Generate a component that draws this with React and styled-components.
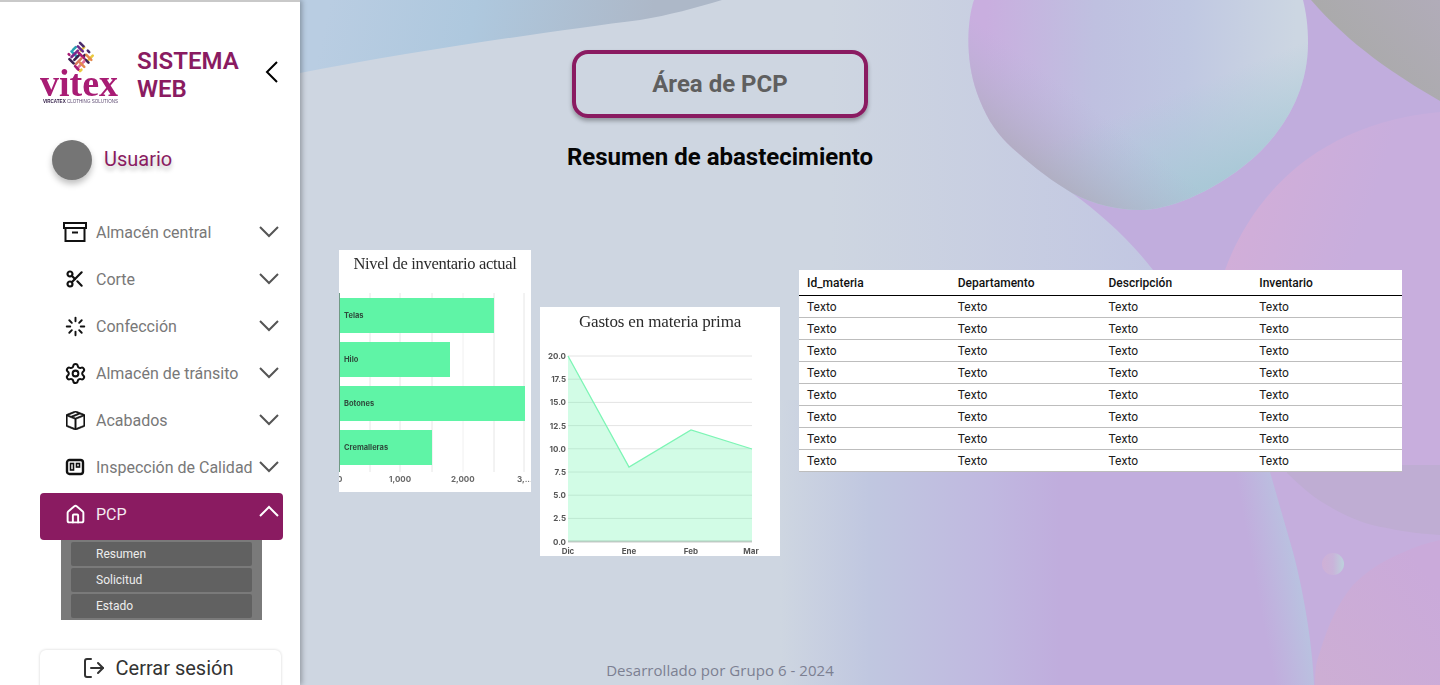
import React from "react";
import styled, { createGlobalStyle } from "styled-components";
import { Scissors, Loader, Settings, House, LogOut } from "lucide-react";
import { BsBoxSeam } from "react-icons/bs";

const GlobalStyle = createGlobalStyle`
  html, body {
    margin: 0;
    padding: 0;
    height: 100%;
    overflow: hidden;
    font-family: Roboto, "Liberation Sans", sans-serif;
  }
  * {
    box-sizing: border-box;
  }
`;

const Page = styled.div`
  display: flex;
  width: 100%;
  height: 685px;
  overflow: hidden;
`;

const Sidebar = styled.aside`
  position: relative;
  z-index: 2;
  flex: 0 0 300px;
  height: 685px;
  overflow: hidden;
  background: #fff;
  border-top: 2px solid #c9c9c9;
  box-shadow: 2px 0 5px rgba(0, 0, 0, 0.28);
`;

const Brand = styled.div`
  display: flex;
  align-items: center;
  height: 64px;
  margin: 38px 21px 0 40px;
`;

const LogoMark = styled.svg`
  flex: 0 0 79px;
  width: 79px;
  height: 64px;
  filter: blur(0.3px);
`;

const BrandName = styled.div`
  margin: 6px 0 0 18px;
  font-size: 24px;
  line-height: 28px;
  font-weight: 600;
  color: #8a1b61;
`;

const CollapseButton = styled.svg`
  margin-left: auto;
  width: 14px;
  height: 24px;
  fill: none;
  stroke: #000;
  stroke-width: 2;
`;

const UserRow = styled.div`
  display: flex;
  align-items: center;
  gap: 12px;
  margin: 36px 0 0 52px;
`;

const Avatar = styled.div`
  width: 40px;
  height: 40px;
  border-radius: 50%;
  background: #757575;
  box-shadow: 0 4px 6px rgba(0, 0, 0, 0.25);
`;

const UserName = styled.span`
  margin-top: -2px;
  font-size: 20px;
  color: #8a1b61;
  text-shadow: 0 4px 4px rgba(0, 0, 0, 0.25);
`;

const Nav = styled.nav`
  margin: 31px 17px 0 40px;
`;

const NavItem = styled.div`
  display: flex;
  align-items: center;
  height: 47px;
  padding: 0 4px 5px 23px;
  border-radius: 4px;
  font-size: 16px;
  color: ${(p) => (p.$active ? "#f4eaf1" : "#787878")};
  background: ${(p) => (p.$active ? "#8a1b61" : "transparent")};
`;

const NavIcon = styled.span`
  display: flex;
  align-items: center;
  justify-content: center;
  width: 24px;
  height: 24px;
  margin-right: 9px;
  color: ${(p) => (p.$active ? "#fff" : "#111")};
`;

const Caret = styled.svg`
  margin-left: auto;
  width: 20px;
  height: 12px;
  overflow: visible;
  fill: none;
  stroke: ${(p) => (p.$active ? "#fff" : "#555")};
  stroke-width: 2;
`;

const SubMenu = styled.div`
  display: flex;
  flex-direction: column;
  gap: 2px;
  width: 201px;
  margin-left: 21px;
  padding: 2px 10px;
  background: #7a7a7a;
`;

const SubItem = styled.div`
  height: 24px;
  padding-left: 25px;
  border-radius: 2px;
  background: #616161;
  font-size: 12px;
  line-height: 24px;
  color: #ededed;
`;

const LogoutCard = styled.div`
  display: flex;
  justify-content: center;
  gap: 10px;
  width: 241px;
  height: 60px;
  margin: 30px 0 0 40px;
  padding: 6px 6px 0 0;
  border-radius: 6px;
  background: #fff;
  box-shadow: 0 0 3px rgba(0, 0, 0, 0.18);
  font-size: 20px;
  line-height: 24px;
  color: #333;
`;

const Main = styled.main`
  position: relative;
  flex: 1;
  display: flex;
  flex-direction: column;
  height: 685px;
  overflow: hidden;
`;

const Backdrop = styled.svg`
  position: absolute;
  inset: 0;
  width: 100%;
  height: 100%;
`;

const Header = styled.header`
  position: relative;
  display: flex;
  flex-direction: column;
  align-items: center;
  padding: 50px 300px 0 0;
`;

const AreaBox = styled.div`
  display: flex;
  align-items: center;
  justify-content: center;
  width: 296px;
  height: 68px;
  border: 4px solid #8a1b61;
  border-radius: 16px;
  box-shadow: 0 3px 4px rgba(0, 0, 0, 0.3);
  font-size: 24px;
  font-weight: 700;
  color: #5f5f5f;
`;

const Subtitle = styled.h2`
  margin: 24px 0 0;
  font-size: 24px;
  line-height: 30px;
  font-weight: 700;
  color: #050505;
`;

const Widgets = styled.section`
  position: relative;
  display: flex;
  align-items: flex-start;
  padding-left: 39px;
  margin-top: 78px;
`;

const ChartCard = styled.figure`
  flex: none;
  position: relative;
  margin: ${(p) => p.$top || 0}px 0 0 ${(p) => p.$left || 0}px;
  width: ${(p) => p.$w}px;
  height: ${(p) => p.$h}px;
  background: #fff;
  overflow: hidden;
`;

const ChartTitle = styled.figcaption`
  padding-top: ${(p) => p.$pad}px;
  text-align: center;
  font-family: "Liberation Serif", serif;
  font-size: ${(p) => p.$size}px;
  letter-spacing: ${(p) => p.$track}px;
  line-height: 20px;
  color: #2b2b2b;
  filter: blur(0.3px);
`;

const ChartSvg = styled.svg`
  position: absolute;
  inset: 0;
  width: 100%;
  height: 100%;
  filter: blur(0.45px);
  font-family: Inter, Roboto, sans-serif;
`;

const Table = styled.table`
  flex: none;
  width: 603px;
  margin: 20px 0 0 19px;
  border-collapse: collapse;
  table-layout: fixed;
  background: #fff;
  font-size: 12px;
  color: #1b1b1b;
`;

const Th = styled.th`
  height: 25px;
  padding: 1px 8px 0;
  text-align: left;
  font-weight: 500;
  color: #111;
  border-bottom: 1px solid #000;
`;

const Td = styled.td`
  height: 22px;
  padding: 1px 8px 0;
  border-bottom: 1px solid #bdbdbd;
`;

const Footer = styled.footer`
  position: relative;
  margin-top: auto;
  padding: 0 300px 6px 0;
  text-align: center;
  font-family: "Open Sans", sans-serif;
  font-size: 15px;
  line-height: 18px;
  letter-spacing: 0.05px;
  color: #7c8092;
`;

const menu = [
  { label: "Almacén central", icon: <ArchiveIcon /> },
  { label: "Corte", icon: <Scissors size={20} strokeWidth={2.6} /> },
  { label: "Confección", icon: <Loader size={21} strokeWidth={2.2} /> },
  { label: "Almacén de tránsito", icon: <Settings size={23} strokeWidth={2.1} /> },
  { label: "Acabados", icon: <BsBoxSeam size={19} style={{ stroke: "currentColor", strokeWidth: 0.6 }} /> },
  { label: "Inspección de Calidad", icon: <BoardIcon /> },
];

const subItems = ["Resumen", "Solicitud", "Estado"];
const columns = ["Id_materia", "Departamento", "Descripción", "Inventario"];
const rows = [1, 2, 3, 4, 5, 6, 7, 8];

// dashes of the logo knot, in a square that is turned 45deg: [colour, x1, y1, x2, y2]
const weave = [
  ["#e9c93f", -4, -10, -4, -5],
  ["#2a9fb0", -10, -4, -10, 0],
  ["#4a2a6b", -10, -10, -5, -10],
  ["#4a2a6b", 1, -10, 3, -10],
  ["#3a2050", 2, -5, 2, -3],
  ["#e9c93f", 8, -10, 8, -4],
  ["#6a2a8c", -9, -6, -2, -6],
  ["#e58a4e", 3, -6, 10, -6],
  ["#26a6bb", -10, 2, -3, 2],
  ["#a81c74", -4, -2, 4, -2],
  ["#3a2050", 6, -2, 10, -2],
  ["#7a2a8c", -6, -3, -6, 6],
  ["#3a2050", -2, 0, -2, 6],
  ["#d9795e", 2, 0, 2, 8],
  ["#e0709a", 6, 0, 6, 10],
  ["#a81c74", -10, 6, -9, 6],
  ["#3a2050", -6, 9, 0, 9],
  ["#e58a4e", 4, 4, 10, 4],
  ["#a81c74", 3, 10, 8, 10],
  ["#e9c93f", 10, 8, 10, 10],
];

function ArchiveIcon() {
  return (
    <svg width="24" height="20" viewBox="0 0 24 20" fill="none" stroke="currentColor" strokeWidth="2">
      <path d="M1 1h22v5H1z" />
      <path d="M2.5 6v13h19V6" />
      <path d="M9 10.5h6" />
    </svg>
  );
}

function BoardIcon() {
  return (
    <svg width="20" height="18" viewBox="0 0 20 18" fill="none" stroke="currentColor" strokeWidth="2.4">
      <rect x="2" y="2" width="16" height="14" rx="2.5" />
      <rect x="5.5" y="5.5" width="3" height="6.5" strokeWidth="1.6" />
      <rect x="11.5" y="5.5" width="3" height="3.5" strokeWidth="1.6" />
    </svg>
  );
}

function ChevronDown({ up, active }) {
  return (
    <Caret viewBox="0 0 20 12" $active={active}>
      <path d={up ? "M1 8 10 -1l9 9" : "M1 1l9 9 9-9"} />
    </Caret>
  );
}

function Logo() {
  return (
    <LogoMark viewBox="0 0 79 64">
      <g transform="translate(40 17) rotate(45)" strokeWidth="2.6" strokeLinecap="round">
        {weave.map(([color, x1, y1, x2, y2], i) => (
          <line key={i} x1={x1} y1={y1} x2={x2} y2={y2} stroke={color} />
        ))}
      </g>
      <text
        x="0"
        y="55.5"
        fontFamily="Liberation Serif, serif"
        fontWeight="700"
        fontSize="38"
        fill="#a81c74"
      >
        vitex
      </text>
      <text x="3" y="62.5" fontFamily="Liberation Sans, sans-serif" fontSize="5" textLength="75" lengthAdjust="spacingAndGlyphs" fill="#5d4a72">
        <tspan fontWeight="700" fill="#2f1b45">VIRCATEX</tspan> CLOTHING SOLUTIONS
      </text>
    </LogoMark>
  );
}

function BarChart() {
  const bars = [
    ["Telas", 48, 155],
    ["Hilo", 92, 111],
    ["Botones", 136, 186],
    ["Cremalleras", 180, 93],
  ];
  return (
    <ChartSvg viewBox="0 0 192 242">
      {[31, 61, 93, 124, 155, 185].map((x) => (
        <line key={x} x1={x} x2={x} y1="43" y2="222" stroke={x % 2 ? "#e6e6e6" : "#f0f0f0"} />
      ))}
      {bars.map(([name, y, w]) => (
        <g key={name}>
          <rect x="0" y={y} width={w} height="35" fill="#5ff4a6" />
          <text x="5" y={y + 20} fontSize="7.5" fontWeight="700" fill="#2f4a3c">
            {name}
          </text>
        </g>
      ))}
      <line x1="0.5" x2="0.5" y1="43" y2="222" stroke="#6f9a84" />
      {[["0", -2], ["1,000", 50], ["2,000", 112], ["3,...", 178]].map(([t, x]) => (
        <text key={t} x={x} y="232" fontSize="8" fontWeight="700" fill="#666">
          {t}
        </text>
      ))}
    </ChartSvg>
  );
}

function AreaChart() {
  const ticks = ["20.0", "17.5", "15.0", "12.5", "10.0", "7.5", "5.0", "2.5", "0.0"];
  const y = (i) => 49 + i * 23.2;
  return (
    <ChartSvg viewBox="0 0 240 249">
      {ticks.map((t, i) => (
        <g key={t}>
          <line x1="28" x2="212" y1={y(i)} y2={y(i)} stroke={i === 8 ? "#c8c8c8" : "#e4e4e4"} strokeWidth={i === 8 ? 2 : 1} />
          <text x="26" y={y(i) + 3} textAnchor="end" fontSize="8" fontWeight="700" fill="#555">
            {t}
          </text>
        </g>
      ))}
      <path d="M28 49 89 160 151 123 212 142V234.6H28Z" fill="#5ff4a6" fillOpacity="0.28" />
      <path d="M28 49 89 160 151 123 212 142" fill="none" stroke="#7df5b5" strokeWidth="1.3" />
      {[["Dic", 28], ["Ene", 89], ["Feb", 151], ["Mar", 211]].map(([t, x]) => (
        <text key={t} x={x} y="247" textAnchor="middle" fontSize="8" fontWeight="700" fill="#555">
          {t}
        </text>
      ))}
    </ChartSvg>
  );
}

const sphere =
  "M974 0C967 20 965 60 977 93 985 115 994 130 1007 143 1028 163 1050 180 1072 193 1095 205 1118 210 1141 210 1165 210 1210 195 1251 160 1285 130 1308 90 1308 43 1308 25 1306 12 1303 0Z";

function Background() {
  return (
    <Backdrop viewBox="300 0 1140 685" preserveAspectRatio="none">
      <defs>
        <linearGradient id="lightUp" gradientUnits="userSpaceOnUse" x1="830" y1="0" x2="1150" y2="0">
          <stop offset="0" stopColor="#ced6e1" />
          <stop offset="1" stopColor="#c2c7e2" />
        </linearGradient>
        <linearGradient id="lightDown" gradientUnits="userSpaceOnUse" x1="780" y1="0" x2="1060" y2="0">
          <stop offset="0" stopColor="#ced6e1" />
          <stop offset="0.32" stopColor="#c0c7e0" />
          <stop offset="0.75" stopColor="#c0b8e0" />
          <stop offset="1" stopColor="#c0addd" />
        </linearGradient>
        <linearGradient id="topBlob" gradientUnits="userSpaceOnUse" x1="330" y1="0" x2="640" y2="70">
          <stop offset="0" stopColor="#b9cde2" />
          <stop offset="0.45" stopColor="#aec8de" />
          <stop offset="1" stopColor="#adb8c8" />
        </linearGradient>
        <linearGradient id="sphere" gradientUnits="userSpaceOnUse" x1="985" y1="50" x2="1295" y2="60">
          <stop offset="0" stopColor="#c9aedf" />
          <stop offset="0.35" stopColor="#bfc0e0" />
          <stop offset="0.65" stopColor="#c0c8e2" />
          <stop offset="1" stopColor="#ccd6e2" />
        </linearGradient>
        <linearGradient id="sphereEdge" gradientUnits="userSpaceOnUse" x1="1130" y1="110" x2="1170" y2="212">
          <stop offset="0" stopColor="#a8cbd8" stopOpacity="0" />
          <stop offset="0.9" stopColor="#a8c8d6" stopOpacity="0.95" />
        </linearGradient>
        <linearGradient id="sphereShade" gradientUnits="userSpaceOnUse" x1="1030" y1="185" x2="1090" y2="105">
          <stop offset="0" stopColor="#adaab8" />
          <stop offset="1" stopColor="#b5b4d6" stopOpacity="0" />
        </linearGradient>
        <linearGradient id="grayBlob" gradientUnits="userSpaceOnUse" x1="1360" y1="70" x2="1440" y2="0">
          <stop offset="0" stopColor="#aaaaaa" />
          <stop offset="1" stopColor="#b1acb9" />
        </linearGradient>
        <linearGradient id="pink" gradientUnits="userSpaceOnUse" x1="1235" y1="200" x2="1360" y2="240">
          <stop offset="0" stopColor="#d2aed8" />
          <stop offset="1" stopColor="#c8aedd" />
        </linearGradient>
        <linearGradient id="bubble" gradientUnits="userSpaceOnUse" x1="1320" y1="680" x2="1440" y2="590">
          <stop offset="0" stopColor="#cdaed4" />
          <stop offset="1" stopColor="#caaada" />
        </linearGradient>
        <linearGradient id="rim" gradientUnits="userSpaceOnUse" x1="1255" y1="580" x2="1298" y2="572">
          <stop offset="0" stopColor="#bcc0e0" stopOpacity="0" />
          <stop offset="1" stopColor="#b9c2e0" stopOpacity="1" />
        </linearGradient>
        <linearGradient id="drop" gradientUnits="userSpaceOnUse" x1="1322" y1="564" x2="1344" y2="564">
          <stop offset="0" stopColor="#cfb0d6" />
          <stop offset="0.5" stopColor="#c9b4da" />
          <stop offset="1" stopColor="#bcd2dc" />
        </linearGradient>
      </defs>

      <rect x="300" y="0" width="1140" height="685" fill="#c1addd" />
      <path d="M300 0H1120V205L1072 193C1100 213 1130 240 1153 270L1200 400H300Z" fill="url(#lightUp)" />
      <rect x="300" y="400" width="760" height="285" fill="url(#lightDown)" />

      <path d="M300 73C420 50 560 30 640 20 670 15 695 8 722 0H300Z" fill="url(#topBlob)" />

      <path d="M1225 270C1245 215 1300 125 1440 112V465H1225Z" fill="url(#pink)" />
      <path d="M1311 0C1350 45 1395 75 1440 101V0Z" fill="url(#grayBlob)" />

      <path d={sphere} fill="url(#sphere)" />
      <path d={sphere} fill="url(#sphereEdge)" />
      <path d={sphere} fill="url(#sphereShade)" />

      <path d="M1268 465 1293 552C1303 590 1312 640 1314 685H1440V465Z" fill="#c5aedd" />
      <path d="M1225 465H1268L1293 552C1303 590 1312 640 1314 685H1275Z" fill="url(#rim)" />
      <path d="M1287 465V473C1300 485 1312 497 1327 505 1345 516 1365 525 1387 528 1405 532 1425 534 1440 535V465Z" fill="#bfadd3" />
      <path d="M1315 685C1315 670 1316 662 1320 652 1328 625 1338 603 1353 585 1368 570 1382 562 1397 555 1412 548 1425 543 1440 540V685Z" fill="url(#bubble)" />
      <circle cx="1333" cy="564" r="11" fill="url(#drop)" />
    </Backdrop>
  );
}

export default function App() {
  return (
    <>
      <GlobalStyle />
      <Page>
        <Sidebar>
          <Brand>
            <Logo />
            <BrandName>
              SISTEMA
              <br />
              WEB
            </BrandName>
            <CollapseButton viewBox="0 0 14 24">
              <path d="M12 2 2 12l10 10" />
            </CollapseButton>
          </Brand>
          <UserRow>
            <Avatar />
            <UserName>Usuario</UserName>
          </UserRow>
          <Nav>
            {menu.map((item) => (
              <NavItem key={item.label}>
                <NavIcon>{item.icon}</NavIcon>
                {item.label}
                <ChevronDown />
              </NavItem>
            ))}
            <NavItem $active>
              <NavIcon $active>
                <House size={21} strokeWidth={2.2} />
              </NavIcon>
              PCP
              <ChevronDown up active />
            </NavItem>
            <SubMenu>
              {subItems.map((s) => (
                <SubItem key={s}>{s}</SubItem>
              ))}
            </SubMenu>
          </Nav>
          <LogoutCard>
            <LogOut size={24} strokeWidth={2} />
            Cerrar sesión
          </LogoutCard>
        </Sidebar>
        <Main>
          <Background />
          <Header>
            <AreaBox>Área de PCP</AreaBox>
            <Subtitle>Resumen de abastecimiento</Subtitle>
          </Header>
          <Widgets>
            <ChartCard $w={192} $h={242}>
              <ChartTitle $pad={4} $size={16.5} $track={-0.3}>Nivel de inventario actual</ChartTitle>
              <BarChart />
            </ChartCard>
            <ChartCard $w={240} $h={249} $top={57} $left={9}>
              <ChartTitle $pad={5} $size={17} $track={-0.15}>Gastos en materia prima</ChartTitle>
              <AreaChart />
            </ChartCard>
            <Table>
              <thead>
                <tr>
                  {columns.map((c) => (
                    <Th key={c}>{c}</Th>
                  ))}
                </tr>
              </thead>
              <tbody>
                {rows.map((r) => (
                  <tr key={r}>
                    {columns.map((c) => (
                      <Td key={c}>Texto</Td>
                    ))}
                  </tr>
                ))}
              </tbody>
            </Table>
          </Widgets>
          <Footer>Desarrollado por Grupo 6 - 2024</Footer>
        </Main>
      </Page>
    </>
  );
}
